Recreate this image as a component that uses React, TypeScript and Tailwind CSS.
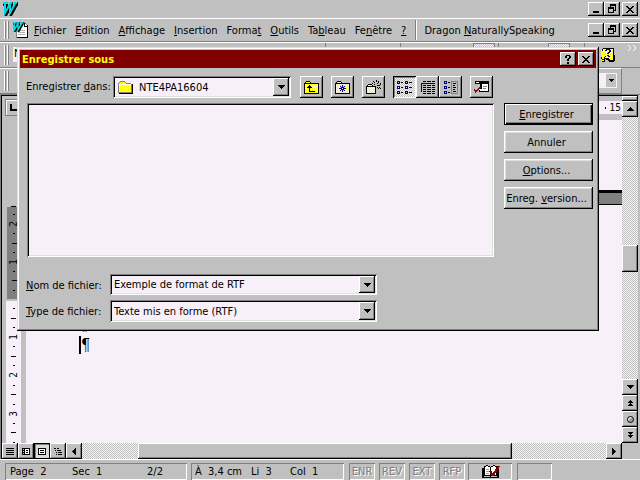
import React from "react";
import type { ReactNode } from "react";

const raised =
  "bg-[#c0c0c0] shadow-[inset_-1px_-1px_#000,inset_1px_1px_#fff,inset_-2px_-2px_#808080]";
const sunken =
  "bg-[#f7f0f8] shadow-[inset_1px_1px_#808080,inset_-1px_-1px_#fff,inset_2px_2px_#000,inset_-2px_-2px_#dfdfdf]";
const dither =
  "bg-[conic-gradient(#c0c0c0_25%,#f7f0f8_0_50%,#c0c0c0_0_75%,#f7f0f8_0)] bg-[length:2px_2px]";

function Art({ w, h, children }: { w: number; h: number; children: ReactNode }) {
  return (
    <svg width={w} height={h} viewBox={`0 0 ${w} ${h}`} shapeRendering="crispEdges" fill="none" className="block shrink-0" aria-hidden="true">
      {children}
    </svg>
  );
}

function Bitmap({ rows }: { rows: string[] }) {
  const colors: Record<string, string> = {
    k: "#000", y: "#ffff00", l: "#fffbe0", w: "#fff", g: "#808080", b: "#000080", r: "#900000",
  };
  return (
    <Art w={rows[0].length} h={rows.length}>
      {rows.flatMap((row, y) =>
        [...row].map((c, x) => (colors[c] ? <rect key={`${x}-${y}`} x={x} y={y} width="1" height="1" fill={colors[c]} /> : null)),
      )}
    </Art>
  );
}

const arrows = {
  up: ["...k...", "..kkk..", ".kkkkk.", "kkkkkkk"],
  down: ["kkkkkkk", ".kkkkk.", "..kkk..", "...k..."],
  left: ["...k", "..kk", ".kkk", "kkkk", ".kkk", "..kk", "...k"],
  right: ["k...", "kk..", "kkk.", "kkkk", "kkk.", "kk..", "k..."],
  pageUp: ["..k..", ".kkk.", "kkkkk", "..k..", ".kkk.", "kkkkk"],
  pageDown: ["kkkkk", ".kkk.", "..k..", "kkkkk", ".kkk.", "..k.."],
};

const folderUp = [
  "..kkkk.........",
  ".kylylk........",
  "kkkkkkkkkkkkkkk",
  "klylylylylylylk",
  "kylylkylylylylk",
  "klylkkkylylylyk",
  "kylkkkkkylylylk",
  "klylykylylylylk",
  "kylylkylylylylk",
  "klylykylylylylk",
  "kylylkkkkkkylyk",
  "klylylylylylylk",
  "kkkkkkkkkkkkkkk",
];
const folderStar = [
  "..kkkk.........",
  ".kylylk........",
  "kkkkkkkkkkkkkkk",
  "klylylylylylylk",
  "kylylylbylylylk",
  "klylybybybylylk",
  "kylylybbbylylyk",
  "klylbbbwbbbylyk",
  "kylylybbbylylyk",
  "klylybybybylylk",
  "kylylylbylylylk",
  "klylylylylylylk",
  "kkkkkkkkkkkkkkk",
];
const folderNew = [
  "..........k....",
  ".......k..k.k..",
  "........k...k..",
  "......k....k..k",
  "..kkkk..k.....k",
  ".kylylk....kkk.",
  "kkkkkkkkkk.....",
  "klylylylyk.k.k.",
  "kylylylylk..k.k",
  "klylylylyk.....",
  "kylylylylk.....",
  "klylylylyk.....",
  "kylylylylk.....",
  "kkkkkkkkkk.....",
];
const folder = [
  "..ggggg........",
  ".gylylyg.......",
  "gyyyyyyyggggg..",
  "gwwwwwwwwwwwwgk",
  "gwylyyylyyylygk",
  "gyyyylyyylyyygk",
  "gwylyyylyyylygk",
  "gyyyylyyylyyygk",
  "gwylyyylyyylygk",
  "gyyyylyyylyyygk",
  "gwylyyylyyylygk",
  "ggggggggggggggk",
  ".kkkkkkkkkkkkkk",
];
const listIcon = [
  "bbb.....bbb.....",
  "b.b.kk..b.b.kkk.",
  "bbb.....bbb.....",
  "................",
  "................",
  "bbb.....bbb.....",
  "b.b.kk..b.b.kkk.",
  "bbb.....bbb.....",
  "................",
  "................",
  "bbb.....bbb.....",
  "b.b.kk..b.b.kkk.",
  "bbb.....bbb.....",
];
const detailIcon = [
  "..kkk.kkkk.kkk",
  "..............",
  "bbbbbbbbbbbbbb",
  "b.............",
  "b.kkk.kkkk.kkk",
  "b.............",
  "b.kkk.kkkk.kkk",
  "b.............",
  "b.kkk.kkkk.kkk",
  "b.............",
  "b.kkk.kkkk.kkk",
  "..............",
  "..kkk.kkkk.kkk",
];
const propsIcon = [
  "bbb....ggggggg",
  "b.b.kk.g.....g",
  "bbb....g.kkk.g",
  ".......g.....g",
  ".......g.kk..g",
  "bbb....g.....g",
  "b.b.kk.g.kkk.g",
  "bbb....g.....g",
  ".......g.kk..g",
  ".......g.....g",
  "bbb....g.kkk.g",
  "b.b.kk.g.....g",
  "bbb....ggggggg",
];
const commandsIcon = [
  ".kkkkkkkkkkkkkk",
  ".kwwwkkkkkkkkkk",
  ".kkkkkkkkkkkkkk",
  "......kkwwwwwwk",
  "......kkwwwwwwk",
  "......kkwggggwk",
  ".....rrkwwwwwwk",
  "....rrkkwgggwwk",
  "r..rrwwwwwwwwwk",
  "rrrr.kwwwwwwwwk",
  ".rr..kkkkkkkkkk",
  ".r.............",
];
const helpIcon = [
  "..kkkkkkkkkkk.",
  ".kylybbbbyllk.",
  "yklybblybblyk.",
  "yylyylylbblyk.",
  "yyylylybblylk.",
  "yyyyylbblylyk.",
  "yyyyyylylylyk.",
  "yyyyylbblylykk",
  "yyyyklybbylykk",
  "kyykylylylylkk",
  "kyykkkkklylykk",
  "ykkk.kkkklylkk",
  ".ylk...kkkkkkk",
  ".kkk....kkkkk.",
];

function WordMark({ small = false }: { small?: boolean }) {
  return (
    <svg width={small ? 12 : 16} height={small ? 10 : 14} viewBox="0 0 16 14" fill="none" aria-hidden="true" className="block">
      <path d="M1 2h5M8 2h2M12 2h4M4 2v10l5-9v9l5-9" stroke="#000" strokeWidth="3.6" />
      <path d="M1 1h5M8 1h2M12 1h3M3 1v10l5-9v9l5-9" stroke="#00d8e0" strokeWidth="2" />
    </svg>
  );
}

function DocIcon() {
  return (
    <div className="grid w-4 shrink-0">
      <div className="col-start-1 row-start-1 pl-[4px]">
        <Art w={12} h={16}>
          <path d="M.5.5h8l3 3v12h-11z" fill="#fff" stroke="#808080" />
          <path d="M8.500 1v3h3M11.500 3v12.500H1" stroke="#000" />
          <path d="M2 8.500h7M2 10.500h7M2 12.500h7" stroke="#b0b0b0" />
        </Art>
      </div>
      <div className="col-start-1 row-start-1">
        <WordMark small />
      </div>
    </div>
  );
}

function Grip() {
  return (
    <div className="flex gap-px self-stretch py-[2px]" aria-hidden="true">
      <div className="w-[2px] border-l border-r border-l-white border-r-[#808080]" />
      <div className="w-[2px] border-l border-r border-l-white border-r-[#808080]" />
    </div>
  );
}

function SysButton({ kind, label }: { kind: "min" | "restore" | "close" | "help"; label: string }) {
  return (
    <button type="button" aria-label={label} className={`flex h-[14px] w-4 items-center justify-center ${raised}`}>
      {kind === "min" && <Art w={10} h={10}><path d="M2 8h6" stroke="#000" strokeWidth="2" /></Art>}
      {kind === "restore" && (
        <Art w={10} h={10}><path d="M3 1h6M3.500 1v3M8.500 1v5M6 6.500h3M1 4h6M1.500 4v5M6.500 4v5M1 8.500h6" stroke="#000" /><path d="M3 1h6M1 4h6" stroke="#000" strokeWidth="2" /></Art>
      )}
      {kind === "close" && <Bitmap rows={["kk....kk", ".kk..kk.", "..kkkk..", "...kk...", "..kkkk..", ".kk..kk.", "kk....kk"]} />}
      {kind === "help" && <Bitmap rows={[".kkkk.", "kk..kk", "kk..kk", "...kk.", "..kk..", "..kk..", "......", "..kk..", "..kk.."]} />}
    </button>
  );
}

function SysButtons() {
  return (
    <div className="flex pr-[2px]">
      <SysButton kind="min" label="Réduire" />
      <SysButton kind="restore" label="Restaurer" />
      <div className="w-[2px]" />
      <SysButton kind="close" label="Fermer" />
    </div>
  );
}

const menus: [string, string, string][] = [
  ["", "F", "ichier"], ["", "E", "dition"], ["", "A", "ffichage"], ["", "I", "nsertion"], ["Forma", "t", ""],
  ["", "O", "utils"], ["Ta", "b", "leau"], ["Fe", "n", "être"], ["", "?", ""],
];

function ToolButton({ label, rows, pressed = false }: { label: string; rows: string[]; pressed?: boolean }) {
  return (
    <button
      type="button"
      aria-label={label}
      aria-pressed={pressed}
      className={`flex h-[22px] w-[23px] items-center justify-center ${
        pressed ? `${dither} shadow-[inset_1px_1px_#000,inset_-1px_-1px_#fff,inset_2px_2px_#808080]` : raised
      }`}
    >
      <Bitmap rows={rows} />
    </button>
  );
}

function DropArrow() {
  return (
    <span className={`pointer-events-none flex w-4 shrink-0 items-center justify-center ${raised}`}>
      <Bitmap rows={arrows.down} />
    </span>
  );
}

function ActionButton({ children, primary = false }: { children: ReactNode; primary?: boolean }) {
  return (
    <button
      type="button"
      className={`h-[22px] w-[89px] whitespace-nowrap bg-[#c0c0c0] pr-1 pt-px text-center ${
        primary
          ? "border border-black shadow-[inset_1px_1px_#fff,inset_-1px_-1px_#000,inset_-2px_-2px_#808080]"
          : "shadow-[inset_-1px_-1px_#000,inset_1px_1px_#fff,inset_-2px_-2px_#808080,inset_2px_2px_#dfdfdf]"
      }`}
    >
      {children}
    </button>
  );
}

function SaveDialog() {
  return (
    <form
      role="dialog"
      aria-label="Enregistrer sous"
      className="absolute left-[17px] top-[47px] flex w-[582px] flex-col bg-[#c0c0c0] p-[3px] shadow-[inset_-1px_-1px_#000,inset_1px_1px_#dfdfdf,inset_-2px_-2px_#808080,inset_2px_2px_#fff]"
    >
      <div className="flex h-[18px] items-center bg-[#800000] pl-[2px] pr-[2px]">
        <h1 className="flex-1 pt-px text-[11px] font-bold text-[#ffff00]">Enregistrer sous</h1>
        <div className="flex gap-[2px]">
          <SysButton kind="help" label="Aide" />
          <SysButton kind="close" label="Fermer" />
        </div>
      </div>
      <div className="flex items-center pl-[6px] pt-2">
        <label htmlFor="folder" className="w-[87px] whitespace-nowrap">Enregistrer <u>d</u>ans:</label>
        <div className={`flex h-[22px] w-[178px] p-[2px] ${sunken}`}>
          <span className="flex items-center pl-[3px]"><Bitmap rows={folder} /></span>
          <select id="folder" className="min-w-0 flex-1 appearance-none bg-transparent pl-[6px] pt-px outline-none">
            <option>NTE4PA16604</option>
          </select>
          <DropArrow />
        </div>
        <div className="ml-[9px] flex gap-2">
          <ToolButton label="Dossier parent" rows={folderUp} />
          <ToolButton label="Favoris" rows={folderStar} />
          <ToolButton label="Nouveau dossier" rows={folderNew} />
          <div className="flex">
            <ToolButton label="Liste" rows={listIcon} pressed />
            <ToolButton label="Détails" rows={detailIcon} />
            <ToolButton label="Propriétés" rows={propsIcon} />
          </div>
          <ToolButton label="Commandes et paramètres" rows={commandsIcon} />
        </div>
      </div>
      <div className="flex gap-[10px] pl-[7px] pt-[5px]">
        <div role="listbox" aria-label="Fichiers" className={`h-[154px] flex-1 ${sunken}`} />
        <div className="flex flex-col gap-[6px] pr-[3px]">
          <ActionButton primary><u>E</u>nregistrer</ActionButton>
          <ActionButton>Annuler</ActionButton>
          <ActionButton><u>O</u>ptions...</ActionButton>
          <ActionButton>Enreg. <u>v</u>ersion...</ActionButton>
        </div>
      </div>
      <div className="grid grid-cols-[84px_267px] gap-y-[5px] pb-[6px] pl-[6px] pt-[17px]">
        <label htmlFor="name" className="self-center pt-[2px]"><u>N</u>om de fichier:</label>
        <div className={`flex h-[21px] p-[2px] ${sunken}`}>
          <input id="name" defaultValue="Exemple de format de RTF" className="min-w-0 flex-1 bg-transparent pl-[2px] outline-none" />
          <DropArrow />
        </div>
        <label htmlFor="type" className="self-center pt-[2px]"><u>T</u>ype de fichier:</label>
        <div className={`flex h-[22px] p-[2px] ${sunken}`}>
          <select id="type" className="min-w-0 flex-1 appearance-none bg-transparent pl-[2px] pt-px outline-none">
            <option>Texte mis en forme (RTF)</option>
          </select>
          <DropArrow />
        </div>
      </div>
    </form>
  );
}

function Marks({ items }: { items: string[] }) {
  return (
    <>
      {items.map((m, i) => (
        <div key={i} className="flex min-h-0 flex-1 items-center justify-center">
          {m === "." && <div className="h-px w-[2px] bg-black" />}
          {m === "-" && <div className="h-px w-[5px] bg-black" />}
          {m !== "." && m !== "-" && <span className="-rotate-90 text-[10px] leading-none">{m}</span>}
        </div>
      ))}
    </>
  );
}

function ScrollButton({ label, rows }: { label: string; rows: string[] }) {
  return (
    <button type="button" aria-label={label} className={`flex h-4 w-4 shrink-0 items-center justify-center ${raised}`}>
      <Bitmap rows={rows} />
    </button>
  );
}

const viewIcons: [string, string[]][] = [
  ["Normal", ["kkkkkkkk", "........", "kkkkkkkk", "........", "kkkkkkkk", "........", "kkkkkkkk"]],
  ["Lecture", ["kkkkkkkk", "k.kwwwwk", "kkkwkkwk", "k.kwwwwk", "kkkwkkwk", "k.kwwwwk", "kkkkkkkk"]],
  ["Page", ["kkkkkkkk", "kwwwwwwk", "kwkkkkwk", "kwwwwwwk", "kwkkkkwk", "kwwwwwwk", "kkkkkkkk"]],
  ["Plan", ["kk.kk...", "........", ".k.kkkk.", "........", "..k.kkkk", "........", "..k.kkkk"]],
];

function Panel({ children, className }: { children?: ReactNode; className: string }) {
  return (
    <div className={`flex h-[17px] shrink-0 items-center whitespace-pre shadow-[inset_1px_1px_#808080,inset_-1px_-1px_#fff] ${className}`}>
      {children}
    </div>
  );
}

export default function App() {
  return (
    <div className="relative flex h-screen min-h-[480px] flex-col overflow-hidden bg-[#c0c0c0] font-['DejaVu_Sans_Condensed','DejaVu_Sans',sans-serif] text-[11px] leading-[14px] text-black">
      <header className="flex h-[18px] shrink-0 items-center justify-between pl-[2px]">
        <WordMark />
        <SysButtons />
      </header>

      <nav className="flex h-6 shrink-0 items-center border-b border-t border-b-[#808080] border-t-white pl-1">
        <Grip />
        <div className="pl-[3px]"><DocIcon /></div>
        <div className="flex flex-1 items-center gap-[9px] pl-[6px]">
          {menus.map(([a, key, b]) => (
            <button key={a + key + b} type="button" className="pt-[2px]">{a}<u>{key}</u>{b}</button>
          ))}
          <div className="flex items-center gap-[7px]">
            <div className="h-5 w-[2px] border-l border-r border-l-[#808080] border-r-white" />
            <button type="button" className="whitespace-nowrap pt-[2px]">Dragon <u>N</u>aturallySpeaking</button>
          </div>
        </div>
        <SysButtons />
      </nav>

      <div className="flex h-[26px] shrink-0 border-b border-t border-b-[#808080] border-t-white pl-1">
        <Grip />
        <div className="ml-1 mt-1 h-[15px] w-[312px] bg-[#f7f0f8] pl-px">N</div>
        <div className="flex h-[5px] flex-1">
          <div className="w-[76px] border-x border-[#808080]" />
          <div className="w-[72px]" />
          <div className={`w-[22px] border-x border-t border-[#808080] ${dither}`} />
          <div className="w-1 border-r border-[#808080]" />
          <div className="w-[49px]" />
          <div className={`w-[22px] border-x border-t border-[#808080] ${dither}`} />
        </div>
        <div className="flex items-center border-l border-[#808080] pl-4 pr-[3px]">
          <Bitmap rows={helpIcon} />
          <div className="ml-[13px] self-start pt-[2px]">
            <Art w={9} h={7}><path d="M0 0l3 3-3 3M5 0l3 3-3 3" stroke="#fff" strokeWidth="1" /></Art>
          </div>
        </div>
      </div>

      <div className="flex h-[26px] shrink-0 pr-[18px]">
        <div className="flex flex-1 border-b border-r border-t border-b-[#808080] border-r-[#808080] border-t-white pl-1 pr-1">
          <Grip />
          <div className="flex-1" />
          <div className="mt-1 flex h-[15px] w-[30px] bg-[#f7f0f8] p-px">
            <div className="flex-1" />
            <div className="flex w-[10px] items-center justify-center bg-[#c0c0c0]">
              <Bitmap rows={["kkkkk", ".kkk.", "..k.."]} />
            </div>
          </div>
        </div>
      </div>

      <main className="flex min-h-0 flex-1 flex-col border-l border-t border-[#808080] pr-[2px]">
        <div className="flex min-h-0 flex-1 border-l border-t border-black">
          <div className="flex min-w-0 flex-1 flex-col">
            <div className="flex h-6 shrink-0 items-start">
              <button type="button" aria-label="Tabulation" className="ml-[3px] mt-[3px] flex h-[17px] w-[17px] items-center justify-center border border-[#808080] shadow-[inset_1px_1px_#fff]">
                <Art w={7} h={7}><path d="M1 0v6h6" stroke="#000" strokeWidth="2" /></Art>
              </button>
              <div className="mt-[5px] flex h-[13px] flex-1 items-center justify-end gap-1 bg-[#f7f0f8] pr-px">
                <div className="h-[2px] w-px bg-black" />
                <span className="text-[10px] leading-none">15</span>
              </div>
            </div>
            <div className="flex min-h-0 flex-1">
              <div className="flex w-6 shrink-0 flex-col overflow-hidden pl-1 pr-[5px]">
                <div className="flex h-[87px] shrink-0 flex-col items-center justify-end"><div className="h-px w-[5px] bg-black" /></div>
                <div className="ml-px flex h-[92px] shrink-0 flex-col bg-[#808080] pb-1 pt-[3px]">
                  <Marks items={[".", "2", ".", "-", ".", "1", ".", "-", "."]} />
                </div>
                <div className="h-[2px] shrink-0" />
                <div className="flex h-[146px] shrink-0 flex-col bg-[#f7f0f8] pt-[3px]">
                  <Marks items={[".", "-", ".", "1", ".", "-", ".", "2", ".", "-", ".", "3", ".", "-", "."]} />
                </div>
              </div>
              <div className="flex flex-1 flex-col bg-[#f7f0f8]">
                <div className="h-[70px] shrink-0" />
                <div className="h-[15px] shrink-0 border-b border-t-[3px] border-black bg-[#808080]" />
                <div className="flex flex-col pl-[53px] pt-[110px] font-['DejaVu_Serif_Condensed','DejaVu_Serif',serif] text-[16px] leading-[20px]">
                  <span>¶</span>
                  <span className="flex items-center"><span className="h-[18px] w-[2px] bg-black" />¶</span>
                </div>
              </div>
            </div>
          </div>
          <div className="flex w-4 shrink-0 flex-col">
            <div className={`h-[5px] shrink-0 ${raised}`} />
            <ScrollButton label="Haut" rows={arrows.up} />
            <div className={`flex min-h-0 flex-1 flex-col ${dither}`}>
              <div className="h-[128px] shrink-0" />
              <div className={`h-[27px] ${raised}`} />
            </div>
            <ScrollButton label="Bas" rows={arrows.down} />
            <ScrollButton label="Page précédente" rows={arrows.pageUp} />
            <button type="button" aria-label="Sélectionner l'objet" className={`flex h-4 w-4 shrink-0 items-center justify-center ${raised}`}>
              <span className="h-[7px] w-[7px] rounded-full border border-black bg-[#a0a0a0] shadow-[inset_1px_1px_#fff]" />
            </button>
            <ScrollButton label="Page suivante" rows={arrows.pageDown} />
          </div>
        </div>
        <div className="flex h-4 shrink-0 border-l border-black">
          {viewIcons.map(([label, rows]) => (
            <button
              key={label}
              type="button"
              aria-label={label}
              className={`flex w-4 shrink-0 items-center justify-center ${label === "Page" ? "bg-[#dcdcdc] shadow-[inset_0_0_0_1px_#000,inset_2px_2px_#808080]" : raised}`}
            >
              <Bitmap rows={rows} />
            </button>
          ))}
          <ScrollButton label="Gauche" rows={arrows.left} />
          <div className={`flex flex-1 ${dither}`}>
            <div className="flex-[56]" />
            <div className={`flex-[374] ${raised}`} />
            <div className="flex-[94]" />
          </div>
          <ScrollButton label="Droite" rows={arrows.right} />
          <div className="w-4 shrink-0" />
        </div>
      </main>

      <footer className="flex h-[21px] shrink-0 items-end border-t border-white bg-[#c0c0c0] pl-[5px]">
        <Panel className="w-[182px] pl-[5px]">
          <span className="w-[62px]">Page  2</span><span className="w-[75px]">Sec  1</span><span>2/2</span>
        </Panel>
        <Panel className="ml-1 w-[153px] pl-1">
          <span className="w-[56px]">À  3,4 cm</span><span className="w-[39px]">Li  3</span><span>Col  1</span>
        </Panel>
        <div className="ml-[5px] flex gap-1 text-[#808080] [text-shadow:1px_1px_#fff]">
          {["ENR", "REV", "EXT", "RFP"].map((t) => (
            <Panel key={t} className="w-[26px] justify-center">{t}</Panel>
          ))}
        </div>
        <Panel className="ml-[3px] w-[44px] justify-center">
          <Art w={19} h={14}>
            <path d="M1 3h2v9H1zM16 3h2v9h-2z" fill="#000" />
            <path d="M3.500 1.500l3-1 3 2 3-2 3 1v9h-12z" fill="#fff" stroke="#000" />
            <path d="M9.500 2v10M1 12.500h17" stroke="#000" />
            <path d="M5 4h3M5 6h3M5 8h3" stroke="#a0a0a0" />
            <path d="M9 6l3 4 6-9" stroke="#900000" strokeWidth="2" />
          </Art>
        </Panel>
        <Panel className="ml-[5px] w-[35px]" />
      </footer>

      <SaveDialog />
    </div>
  );
}
